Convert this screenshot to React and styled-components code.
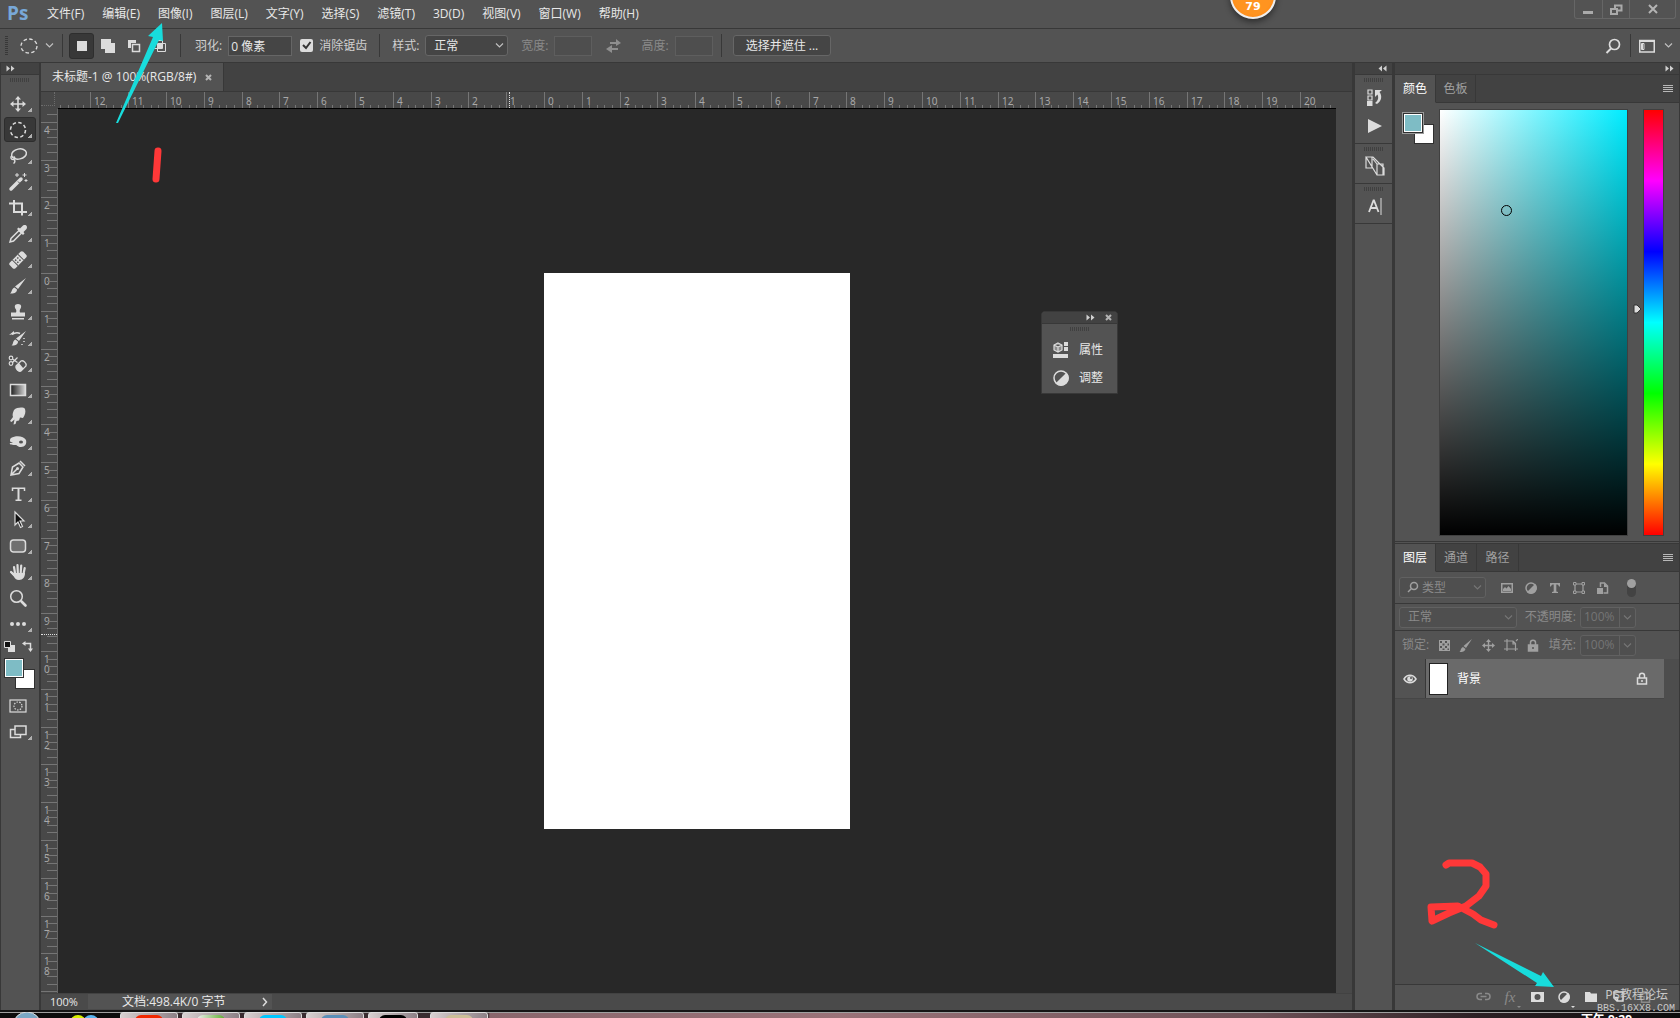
import React from "react";
import styled, { createGlobalStyle, css } from "styled-components";

const c = {
  bar: "#535353",
  dark: "#424242",
  ruler: "#484848",
  line: "#383838",
  canvas: "#282828",
  edge: "#666666",
  icon: "#dcdcdc",
  text: "#e8e8e8",
  dim: "#8a8a8a",
  fg: "#7ebcc5",
};

const Global = createGlobalStyle`
  * { box-sizing: border-box; }
  body {
    margin: 0;
    background: ${c.bar};
    color: ${c.text};
    font: 12px/16px "Open Sans", "Noto Sans CJK SC", sans-serif;
  }
  button, input, select { font: inherit; color: inherit; margin: 0; }
  button { background: none; border: 0; padding: 0; }
  svg { display: block; flex: none; }
`;

/* ---------- shell ---------- */

const Shell = styled.div`
  position: relative;
  display: flex;
  flex-direction: column;
  height: 100vh;
  overflow: hidden;
`;

const MenuBar = styled.header`
  display: flex;
  align-items: flex-start;
  height: 29px;
  flex: none;
  border-bottom: 1px solid ${c.line};
`;

const Logo = styled.div`
  width: 39px;
  padding-left: 7px;
  color: #78a8d8;
  font: 700 19px/27px "Open Sans", sans-serif;
`;

const Menus = styled.nav`
  display: flex;
  flex: 1;
  gap: 2px;
`;

const MenuItem = styled.button`
  height: 28px;
  padding: 0 8px;
  white-space: nowrap;
`;

const WindowControls = styled.div`
  display: flex;
  margin-right: 4px;
  border: 1px solid ${c.edge};
  border-top: 0;
  border-radius: 0 0 3px 3px;
`;

const WindowButton = styled.button`
  display: grid;
  place-items: center;
  width: ${(p) => (p.$wide ? 46 : 27)}px;
  height: 18px;
  & + & { border-left: 1px solid ${c.edge}; }
`;

const Badge = styled.div`
  position: absolute;
  top: -27px;
  left: calc(75% - 30px);
  width: 46px;
  height: 46px;
  border: 2px solid #eeeeee;
  border-radius: 50%;
  background: radial-gradient(circle, #ff9420 60%, #ff8614 84%, #c65a08 100%);
  box-shadow: 0 3px 6px rgba(0, 0, 0, 0.45);
  color: #fff;
  font: 700 11px/14px "DejaVu Sans", sans-serif;
  text-align: center;
  padding-top: 25px;
`;

/* ---------- options bar ---------- */

const OptionsBar = styled.div`
  display: flex;
  align-items: center;
  flex: none;
  height: 34px;
  padding: 0 7px 0 5px;
  border-bottom: 1px solid ${c.line};
`;

const Separator = styled.span`
  width: 1px;
  height: 23px;
  background: ${c.line};
  margin: 0 ${(p) => p.$after || 0}px 0 ${(p) => p.$before || 0}px;
`;

const SideGrip = styled.span`
  width: 3px;
  height: 19px;
  background: repeating-linear-gradient(${c.line} 0 1px, transparent 1px 2px);
`;

const ToolPreset = styled.button`
  display: flex;
  align-items: center;
  gap: 7px;
  margin-left: 12px;
`;

const WorkspaceButton = styled.button`
  display: flex;
  align-items: center;
  gap: 9px;
`;

const ModeButton = styled.button`
  display: grid;
  place-items: center;
  width: 25px;
  height: 26px;
  margin-right: 1px;
  border: 1px solid ${(p) => (p.$active ? "#2e2e2e" : "transparent")};
  border-radius: 3px;
  background: ${(p) => (p.$active ? "#383838" : "none")};
`;

const Field = styled.label`
  display: flex;
  align-items: center;
  gap: ${(p) => (p.$tight ? 4 : 6)}px;
  white-space: nowrap;
  margin: 0 ${(p) => p.$after || 0}px 0 ${(p) => p.$before || 0}px;
  color: ${(p) => (p.$dim ? c.dim : "#d0d0d0")};
`;

const TextInput = styled.input`
  width: ${(p) => p.$w}px;
  height: 20px;
  padding: 0 2px;
  border: 1px solid ${(p) => (p.disabled ? "#5e5e5e" : c.edge)};
  background: ${(p) => (p.disabled ? "#4e4e4e" : "#454545")};
  color: ${c.text};
`;

const Check = styled.span`
  position: relative;
  input {
    display: block;
    appearance: none;
    width: 13px;
    height: 13px;
    border-radius: 2px;
    background: ${c.icon};
  }
  svg {
    position: absolute;
    inset: 0;
    pointer-events: none;
  }
`;

const SelectBox = styled.span`
  position: relative;
  display: block;
  width: ${(p) => p.$w}px;
  select {
    display: block;
    appearance: none;
    width: 100%;
    height: 21px;
    padding: 0 20px 0 ${(p) => p.$pad || 8}px;
    border: 1px solid ${(p) => (p.$dim ? "#616161" : c.edge)};
    border-radius: 3px;
    background: ${(p) => (p.$dim ? "#4f4f4f" : "#454545")};
    color: ${(p) => (p.$dim ? c.dim : c.text)};
    opacity: 1;
  }
  svg {
    position: absolute;
    top: 7px;
    right: 4px;
    pointer-events: none;
  }
  svg.lead {
    top: 4px;
    left: 8px;
    right: auto;
  }
`;

const PushButton = styled.button`
  height: 21px;
  padding: 0 12px;
  border: 1px solid ${c.edge};
  border-radius: 3px;
  background: #454545;
  white-space: nowrap;
`;

const Spacer = styled.span`
  flex: 1;
`;

/* ---------- main area ---------- */

const Main = styled.main`
  display: flex;
  flex: 1;
  min-height: 0;
`;

const ToolColumn = styled.aside`
  display: flex;
  flex-direction: column;
  width: 41px;
  border: solid ${c.line};
  border-width: 0 2px 0 1px;
`;

const ColumnHead = styled.div`
  display: flex;
  align-items: center;
  justify-content: ${(p) => p.$justify || "flex-start"};
  height: 12px;
  flex: none;
  padding: 0 5px;
  border-bottom: 1px solid ${c.line};
  background: ${c.dark};
`;

const Grip = styled.div`
  width: 20px;
  height: 4px;
  flex: none;
  margin: 3px auto 0;
  background: repeating-linear-gradient(90deg, #404040 0 1px, transparent 1px 2px);
`;

const ToolList = styled.div`
  display: flex;
  flex-direction: column;
  gap: 1px;
  padding: ${(p) => (p.$first ? 9 : 0)}px 3px 0;
`;

const Tool = styled.button`
  position: relative;
  display: flex;
  align-items: center;
  width: 32px;
  height: 25px;
  padding-left: 1px;
  border: 1px solid ${(p) => (p.$active ? "#2d2d2d" : "transparent")};
  border-radius: 3px;
  background: ${(p) => (p.$active ? "#383838" : "none")};
  ${(p) =>
    p.$more &&
    css`
      &::after {
        content: "";
        position: absolute;
        right: 3px;
        bottom: 3px;
        width: 4px;
        height: 4px;
        background: linear-gradient(135deg, transparent 50%, #b0b0b0 50%);
      }
    `}
`;

const SwatchTools = styled.div`
  display: flex;
  justify-content: space-between;
  padding: 5px 6px 0 3px;
`;

const Swatches = styled.div`
  position: relative;
  width: 31px;
  height: 31px;
  margin: ${(p) => p.$m};
`;

const Swatch = styled.button`
  position: absolute;
  width: 20px;
  height: 20px;
  border: 1px solid #303030;
  ${(p) =>
    p.$front
      ? css`
          top: 0;
          left: 0;
          background: ${c.fg};
          box-shadow: inset 0 0 0 1px #fff;
          outline: ${p.$ring ? "1px solid #9a9a9a" : "0"};
          z-index: 1;
        `
      : css`
          right: 0;
          bottom: 0;
          background: #fff;
        `}
`;

/* ---------- document ---------- */

const DocumentArea = styled.section`
  display: flex;
  flex-direction: column;
  flex: 1;
  min-width: 0;
`;

const DocTabs = styled.div`
  display: flex;
  flex: none;
  height: 29px;
  background: ${c.dark};
  border-bottom: 1px solid ${c.line};
`;

const DocTab = styled.div`
  display: flex;
  align-items: center;
  gap: 9px;
  padding: 0 11px;
  background: ${c.bar};
  border-right: 1px solid ${c.line};
  white-space: nowrap;
`;

const DocGrid = styled.div`
  display: grid;
  flex: 1;
  min-height: 0;
  grid-template-columns: 17px 1fr 16px;
  grid-template-rows: 17px 1fr;
  background: ${c.ruler};
`;

const RulerCorner = styled.div`
  border: dotted #6c6c6c;
  border-width: 0 1px 1px 0;
  margin: 0 3px 3px 0;
`;

const HRuler = styled.div`
  position: relative;
  overflow: hidden;
  border-bottom: 1px solid #000;
`;

const VRuler = styled.div`
  position: relative;
  overflow: hidden;
  border-right: 1px solid ${c.edge};
`;

const HMark = styled.span`
  position: absolute;
  bottom: 0;
  height: ${(p) => (p.$major ? 16 : 3)}px;
  border-left: 1px ${(p) => (p.$cursor ? "dotted #e0e0e0" : "solid #757575")};
  padding-left: 3px;
  color: #a8a8a8;
  font: 10px/18px "Noto Sans", sans-serif;
`;

const VMark = styled.span`
  position: absolute;
  right: 0;
  width: ${(p) => (p.$major ? 16 : 3)}px;
  border-top: 1px ${(p) => (p.$cursor ? "dotted #e0e0e0" : "solid #757575")};
  padding: 2px 7px 0 3px;
  color: #a8a8a8;
  font: 10px/10px "Noto Sans", sans-serif;
  word-break: break-all;
`;

const Canvas = styled.div`
  position: relative;
  display: grid;
  place-items: center;
  background: ${c.canvas};
`;

const Page = styled.div`
  width: 306px;
  height: 556px;
  background: #fff;
`;

const FloatPanel = styled.div`
  position: absolute;
  top: 202px;
  right: 218px;
  width: 77px;
  border: 1px solid ${c.line};
  border-radius: 4px 4px 0 0;
  background: ${c.bar};
  overflow: hidden;
`;

const FloatHead = styled(ColumnHead)`
  gap: 10px;
`;

const FloatItems = styled.div`
  padding: 5px 0 1px;
`;

const FloatItem = styled.button`
  display: flex;
  align-items: center;
  gap: 10px;
  width: 100%;
  height: 28px;
  padding: 0 11px;
`;

const StatusBar = styled.footer`
  display: flex;
  flex: none;
  height: 17px;
  background: #4a4a4a;
  border-top: 1px solid ${c.dark};
`;

const StatusZoom = styled.span`
  width: 47px;
  padding-left: 9px;
  font-size: 11px;
  line-height: 15px;
`;

const StatusInfo = styled.button`
  display: flex;
  align-items: center;
  justify-content: space-between;
  width: 184px;
  height: 15px;
  padding: 0 3px 0 34px;
  background: ${c.bar};
  white-space: nowrap;
`;

/* ---------- right docks ---------- */

const Docks = styled.aside`
  display: flex;
  width: 328px;
  flex: none;
  border: solid ${c.line};
  border-width: 0 1px 0 3px;
`;

const IconDock = styled.div`
  width: 39px;
  flex: none;
  border-right: 2px solid ${c.line};
`;

const IconGroup = styled.div`
  display: flex;
  flex-direction: column;
  align-items: center;
  padding-bottom: 3px;
  border-bottom: 1px solid ${c.line};
`;

const DockButton = styled.button`
  display: grid;
  place-items: center;
  width: 32px;
  height: 28px;
  margin-top: 1px;
  margin-left: 3px;
`;

const Panels = styled.div`
  display: flex;
  flex-direction: column;
  flex: 1;
  min-width: 0;
  border-left: 1px solid ${c.line};
`;

const PanelTabs = styled.div`
  display: flex;
  align-items: stretch;
  flex: none;
  height: 28px;
  background: ${c.dark};
`;

const PanelTab = styled.button`
  width: ${(p) => p.$w}px;
  white-space: nowrap;
  border: solid ${c.line};
  border-width: 0 1px 1px 0;
  background: ${(p) => (p.$active ? c.bar : "none")};
  border-bottom-color: ${(p) => (p.$active ? c.bar : c.line)};
  color: ${(p) => (p.$active ? "#fff" : "#a0a0a0")};
`;

const TabFill = styled.div`
  display: flex;
  align-items: center;
  justify-content: flex-end;
  flex: 1;
  padding-right: 6px;
  border-bottom: 1px solid ${c.line};
`;

const ColorBody = styled.div`
  display: flex;
  padding: 6px 15px 5px 8px;
  border-bottom: 1px solid ${c.line};
`;

const ColorField = styled.div`
  position: relative;
  flex: 1;
  height: 427px;
  margin: 0 15px 0 5px;
  border: 1px solid #404040;
  background: linear-gradient(to top, #000, transparent), linear-gradient(to right, #fff, #00ecff);
`;

const Picker = styled.span`
  position: absolute;
  left: 61px;
  top: 95px;
  width: 11px;
  height: 11px;
  border: 1px solid #000;
  border-radius: 50%;
`;

const Hue = styled.div`
  position: relative;
  width: 21px;
  height: 427px;
  border: 1px solid #404040;
  background: linear-gradient(#f00, #f0f, #00f, #0ff, #0f0, #ff0, #f00);
  svg {
    position: absolute;
    left: -11px;
    top: 194px;
  }
`;

const LayersPanel = styled.div`
  position: relative;
  display: flex;
  flex-direction: column;
  flex: 1;
  min-height: 0;
  margin-top: 1px;
  border-top: 1px solid ${c.line};
`;

const PanelRow = styled.div`
  display: flex;
  align-items: center;
  flex: none;
  height: ${(p) => p.$h}px;
  padding: 0 4px;
  border-bottom: ${(p) => (p.$last ? 0 : 1)}px solid ${c.line};
`;

const IconStrip = styled.div`
  display: flex;
  align-items: center;
  justify-content: space-between;
  width: ${(p) => p.$w}px;
  margin: 0 ${(p) => p.$after}px 0 ${(p) => p.$before}px;
`;

const Toggle = styled.button`
  width: 9px;
  height: 18px;
  border-radius: 5px;
  background: #434343;
  &::before {
    content: "";
    display: block;
    width: 9px;
    height: 9px;
    border-radius: 50%;
    background: #a0a0a0;
    margin-bottom: 9px;
  }
`;

const Amount = styled.span`
  display: flex;
  height: 21px;
  border: 1px solid #616161;
  border-radius: 3px;
  background: #4f4f4f;
  input {
    width: 38px;
    padding: 0 3px;
    border: 0;
    background: none;
    color: #757575;
  }
  button {
    width: 16px;
    display: grid;
    place-items: center;
    border-left: 1px solid #616161;
  }
`;

const LayerList = styled.div`
  flex: 1;
  padding-right: 15px;
  background: #4d4d4d;
`;

const LayerRow = styled.div`
  display: flex;
  height: 40px;
  border-bottom: 1px solid #464646;
`;

const EyeButton = styled.button`
  display: grid;
  place-items: center;
  width: 31px;
  background: ${c.bar};
  border-right: 1px solid ${c.line};
`;

const LayerMain = styled.div`
  display: flex;
  align-items: center;
  flex: 1;
  gap: 9px;
  padding: 0 16px 0 3px;
  background: #6a6a6a;
  color: #fff;
`;

const Thumb = styled.span`
  width: 19px;
  height: 32px;
  border: 1px solid #222;
  background: #fff;
`;

const LayerFoot = styled.div`
  display: flex;
  align-items: center;
  justify-content: flex-end;
  gap: 3px;
  flex: none;
  height: 26px;
  padding: 0 22px 2px 0;
  border-top: 1px solid ${c.line};
`;

const FootButton = styled.button`
  position: relative;
  display: grid;
  place-items: center;
  width: 24px;
  height: 23px;
  color: ${(p) => (p.$dim ? c.dim : c.icon)};
  font: italic 15px/20px "Liberation Serif", serif;
  ${(p) =>
    p.$menu &&
    css`
      &::after {
        content: "";
        position: absolute;
        right: 1px;
        bottom: 0;
        border: solid transparent;
        border-width: 2px 2px 0;
        border-top-color: currentColor;
      }
    `}
`;

const Watermark = styled.div`
  position: absolute;
  right: 5px;
  bottom: 3px;
  color: #c8c8c8;
  font: 10px/12px "Liberation Mono", "Noto Sans CJK SC", monospace;
  text-align: right;
  div:first-child {
    font: 12px/13px "Liberation Mono", "Noto Sans CJK SC", monospace;
    padding-right: 7px;
  }
`;

/* ---------- desktop task bar ---------- */

const TaskBar = styled.div`
  display: flex;
  gap: 4px;
  flex: none;
  height: 8px;
  padding-left: 120px;
  border-top: 2px solid #151515;
  box-shadow: inset 0 1px 0 #a0a0a0;
  overflow: hidden;
  position: relative;
  background: linear-gradient(90deg, #0c0c0c 120px, #3a2c30 122px 488px, #8a666c 490px, #9a7278 50%, #6d5056 75%, #2c2024 88%, #0c0c0c);
`;

const TaskButton = styled.button`
  width: ${(p) => p.$w || 58}px;
  height: 8px;
  margin-left: ${(p) => p.$gap || 0}px;
  border: 1px solid #ddd;
  border-radius: 3px 3px 0 0;
  background: linear-gradient(90deg, #d8d0d0, #8d8086);
  &::before {
    content: "";
    display: block;
    width: 28px;
    height: 6px;
    margin: 2px auto 0;
    border-radius: 6px 6px 0 0;
    background: ${(p) => p.$tone};
  }
`;

const StartOrbs = styled.svg`
  position: absolute;
  left: 0;
  top: 0;
`;

const Clock = styled.time`
  position: absolute;
  right: 48px;
  top: 0;
  color: #fff;
  font-weight: 700;
  white-space: nowrap;
`;

const Annotation = styled.svg`
  position: absolute;
  pointer-events: none;
  ${(p) => p.$place}
`;

/* ---------- icons ---------- */

const Svg = ({ w = 24, h = w, children, ...rest }) => (
  <svg width={w} height={h} viewBox={`0 0 ${w} ${h}`} fill="none" stroke={c.icon} strokeWidth="1.5" aria-hidden="true" {...rest}>
    {children}
  </svg>
);

const Chevron = ({ color = "#c0c0c0" }) => (
  <Svg w={9} h={7} stroke={color} strokeWidth="1.2"><path d="M1 1.5l3.5 3.5L8 1.5" /></Svg>
);

const Double = ({ left }) => (
  <Svg w={9} h={7} stroke="none" fill="#d0d0d0">
    <path d={left ? "M4 .5v6L.5 3.5zM8.5 .5v6L5 3.5z" : "M.5 .5v6L4 3.5zM5 .5v6l3.5-3z"} />
  </Svg>
);

const Close = ({ s = 7 }) => (
  <Svg w={s} stroke="#b4b4b4" strokeWidth="2"><path d={`M1 1L${s - 1} ${s - 1}M${s - 1} 1L1 ${s - 1}`} /></Svg>
);

const MenuLines = () => (
  <Svg w={10} h={8} stroke="#b8b8b8" strokeWidth="1"><path d="M0 .5h10M0 2.5h10M0 4.5h10M0 6.5h10" /></Svg>
);

const F = { fill: c.icon, stroke: "none" };

const glyphs = {
  move: (
    <g>
      <path strokeWidth="1.6" d="M12 6v12M6 12h12" />
      <path {...F} d="M12 4l3 3.5H9zM12 20l3-3.5H9zM4 12l3.5-3v6zM20 12l-3.5-3v6z" />
    </g>
  ),
  marquee: <circle cx="12" cy="12" r="7.5" strokeDasharray="3.5 2.4" />,
  lasso: (
    <g>
      <ellipse cx="13" cy="10" rx="7.5" ry="5" transform="rotate(-12 13 10)" />
      <path d="M6 12c-2 1-1 3.5 1 3.5s2.5-2 .5-3M8 15.5c1.5 1 1 3-.5 4" />
    </g>
  ),
  wand: (
    <g>
      <path d="M5 19L15 9" strokeWidth="3.5" strokeLinecap="round" />
      <path d="M12 11.5l1.5 1.500" stroke={c.bar} strokeWidth="1" />
      <path strokeWidth="1" d="M11 3v4M9 5h4M18.5 3v4M16.5 5h4M20 9v3M18.5 10.5h3" />
    </g>
  ),
  crop: <path strokeWidth="2" d="M3 7.5h13v12M8 4v12h13" />,
  eyedropper: (
    <g>
      <path d="M4 20l1-3.5 8-8 2.5 2.5-8 8z" />
      <path {...F} d="M11 7l1.5-1.5 1.5 1 3-3c3-1.500 5 1 3.5 3.5l-3 3 1 1.5L17 13z" />
    </g>
  ),
  heal: (
    <g transform="rotate(-45 12 12)">
      <rect {...F} x="2.500" y="8" width="19" height="8" rx="2" />
      <path stroke={c.bar} strokeWidth="1" d="M8 8v8M16 8v8" />
      <path stroke={c.bar} strokeDasharray="1.5 1.5" d="M9.5 10.5h6M9.5 13.5h6" />
    </g>
  ),
  brush: <path {...F} d="M20 4L12 15l-3-2.500zM8.5 13.5l2.5 2c0 3-3 4.5-7 4 2-1 1.5-5 4.5-6z" />,
  stamp: <path {...F} d="M12 4c3.5 0 4 3 2 5.5-.5 1-.5 2 0 3H19v4H5v-4h5c.5-1 .5-2 0-3C8 7 8.500 4 12 4zM6 18h12v1.500H6z" />,
  history: (
    <g>
      <path {...F} d="M20 5l-7 10-3-2.500zM9.5 13.5l2.5 2c0 3-3 4.5-6.5 4 2-1 1-5 4-6zM3 9l5-4v3z" />
      <path d="M6 8.500c3-2 6-2 8-1M18 12v1M18 15v1M16 18v1" />
    </g>
  ),
  eraser: (
    <g>
      <path strokeWidth="1.300" d="M10 14l5-5c2-1 6 2 5 5l-5 5c-2 1-6-2-5-5z" />
      <path {...F} d="M13 11l4.500 5.500-3 3c-2 .5-5-2-4.500-5z" />
      <g strokeWidth="1.200"><circle cx="5" cy="6" r="1.800" /><circle cx="5" cy="11.500" r="1.800" /><path d="M6.500 7l5 3.500M6.500 10.500l5-5" /></g>
    </g>
  ),
  gradient: (
    <g>
      <defs><linearGradient id="gr"><stop stopColor="#1c1c1c" /><stop offset="1" stopColor="#d8d8d8" /></linearGradient></defs>
      <rect x="4.500" y="6.500" width="15" height="11" fill="url(#gr)" />
    </g>
  ),
  smudge: <path {...F} d="M8 6c3-3 10-3 11-1 1 3 0 6-2 9l-3-.5-1 3-2.500.5-1 3-2 .5 1-5-3 2.500-1.500-1L7 13c-1-2 0-5 1-7z" />,
  dodge: <path {...F} fillRule="evenodd" d="M5 8c5-3 13-2 15 2 1 4-1 7-5 7-4 0-3-2-6-2-4 0-6-1-5-2 1 0 2 0 3-.5L4.500 12C3.500 10 4 9 5 8zm10 2.500a2 1.500 0 100 3 2 1.500 0 000-3z" />,
  pen: (
    <g>
      <path d="M5 19l1.500-8L13 7l4 4-4 6.500zM14 5l5 5M5 19l6-6" />
      <circle {...F} cx="11.500" cy="12.500" r="1.500" />
    </g>
  ),
  type: (
    <g>
      <path d="M6.5 9V6.200h12V9M9.500 18.300h6" />
      <path strokeWidth="2" d="M12.500 6v12" />
    </g>
  ),
  arrow: <path fill="#111" strokeWidth="1.200" d="M9 4l9 9h-4l2.500 5.500-2 1L12 14l-3 3z" />,
  rect: <rect x="4.500" y="6" width="15" height="12" rx="3" fill="#707070" />,
  hand: (
    <g>
      <path {...F} d="M8 13h11c0 4-2 7-6 7-3 0-4-1.500-5.500-4L4.500 12.500c0-1.500 1.500-1.500 2.500 0z" />
      <path strokeWidth="2.200" strokeLinecap="round" d="M9 13L8 7M11.800 13l-.3-8M14.700 13l.5-7.500M17.600 13.500L18.700 8M8 15L5 12" />
    </g>
  ),
  zoom: <g><circle cx="10.500" cy="10.500" r="5.800" strokeWidth="1.500" /><path strokeWidth="2.600" strokeLinecap="round" d="M15.500 15.500l4 4" /></g>,
  dots: <g {...F}><circle cx="6" cy="12" r="2" /><circle cx="12" cy="12" r="2" /><circle cx="18" cy="12" r="2" /></g>,
  mask: <g><rect x="4" y="6" width="16" height="12" strokeWidth="1.200" /><circle cx="12" cy="12" r="4" strokeDasharray="1.500 1.300" strokeWidth="1.200" /></g>,
  screens: <g><path d="M9 9.500H4.500v8h10V15" /><rect x="9" y="6" width="11" height="8.500" /></g>,
};

const tools = [
  ["move", "移动"], ["marquee", "椭圆选框"], ["lasso", "套索"], ["wand", "魔棒"], ["crop", "裁剪"],
  ["eyedropper", "吸管"], ["heal", "修复画笔"], ["brush", "画笔"], ["stamp", "仿制图章"], ["history", "历史记录画笔"],
  ["eraser", "橡皮擦"], ["gradient", "渐变"], ["smudge", "涂抹"], ["dodge", "减淡"], ["pen", "钢笔"],
  ["type", "文字"], ["arrow", "选择路径"], ["rect", "形状"], ["hand", "抓手"], ["zoom", "缩放"], ["dots", "更多"],
];

const menus = ["文件(F)", "编辑(E)", "图像(I)", "图层(L)", "文字(Y)", "选择(S)", "滤镜(T)", "3D(D)", "视图(V)", "窗口(W)", "帮助(H)"];

const HalfCircle = ({ s = 12, color = c.icon }) => (
  <Svg w={s} stroke={color} strokeWidth="1.500">
    <circle cx={s / 2} cy={s / 2} r={s / 2 - 1} />
    <path fill={color} stroke="none" d={`M${s * 0.85} ${s * 0.15}A${s / 2 - 1} ${s / 2 - 1} 0 0 1 ${s * 0.15} ${s * 0.85}z`} />
  </Svg>
);

const Padlock = ({ solid, color }) => (
  <Svg w={12} h={13} stroke={color}>
    <path d="M3.500 6V3.500C3.500 .5 8.500 .5 8.500 3.500V6" />
    <rect x="1.500" y="6" width="9" height="6" fill={solid ? color : "none"} />
    <path d="M6 8v2" stroke={solid ? c.bar : color} />
  </Svg>
);

/* ---------- rulers ---------- */

const CM = 37.8;
const PAGE_W = 306;
const PAGE_H = 556;
const range = (a, b) => Array.from({ length: b - a + 1 }, (_, i) => a + i);
const at = (n, size) => `calc(50% + ${Math.round(n * CM - size / 2)}px)`;

const Horizontal = () => (
  <HRuler>
    {range(-64, 104).map((n) =>
      n % 5 === 0 ? (
        <HMark key={n} $major style={{ left: at(n / 5, PAGE_W) }}>{Math.abs(n / 5)}</HMark>
      ) : (
        <HMark key={n} style={{ left: at(n / 5, PAGE_W) }} />
      )
    )}
    <HMark $major $cursor style={{ left: at(-0.92, PAGE_W) }} />
  </HRuler>
);

const Vertical = () => (
  <VRuler>
    {range(-21, 95).map((n) =>
      n % 5 === 0 ? (
        <VMark key={n} $major style={{ top: at(n / 5, PAGE_H) }}>{n < 95 ? Math.abs(n / 5) : null}</VMark>
      ) : (
        <VMark key={n} style={{ top: at(n / 5, PAGE_H) }} />
      )
    )}
    <VMark $major $cursor style={{ top: at(9.54, PAGE_H) }} />
  </VRuler>
);

/* ---------- page ---------- */

const Options = () => (
  <OptionsBar>
    <SideGrip />
    <ToolPreset aria-label="工具预设">
      <Svg w={18} strokeWidth="1.300"><ellipse cx="9" cy="9" rx="8" ry="7" strokeDasharray="3.500 2.400" /></Svg>
      <Chevron />
    </ToolPreset>
    <Separator $before={8} $after={6} />
    <ModeButton $active aria-label="新选区"><Svg w={14} {...F}><path d="M2 2h10v10H2z" /></Svg></ModeButton>
    <ModeButton aria-label="添加到选区"><Svg w={14} {...F}><path d="M0 0h10v4h4v10H4v-4H0z" /></Svg></ModeButton>
    <ModeButton aria-label="从选区减去"><Svg w={14}><path {...F} d="M1 1h8v3H4v5H1z" /><path d="M5.500 5.500h7v7h-7z" /></Svg></ModeButton>
    <ModeButton aria-label="与选区交叉"><Svg w={14}><path strokeWidth="1" d="M1.500 1.500h8v8h-8zM4.500 4.500h8v8h-8z" /><path {...F} d="M5 5h4v4H5z" /></Svg></ModeButton>
    <Separator $before={7} $after={14} />
    <Field $after={8}>羽化: <TextInput $w={64} defaultValue="0 像素" /></Field>
    <Field>
      <Check>
        <input type="checkbox" defaultChecked />
        <Svg w={13} stroke="#333" strokeWidth="2"><path d="M3 6l3 3 4.500-6" /></Svg>
      </Check>
      消除锯齿
    </Field>
    <Separator $before={12} $after={12} />
    <Field $after={13}>
      样式:
      <SelectBox $w={83}><select><option>正常</option></select><Chevron /></SelectBox>
    </Field>
    <Field $dim $after={14}>宽度: <TextInput $w={38} disabled /></Field>
    <Svg w={16} h={14} {...F} fill="#8f8f8f"><path d="M4 3h6V0l5 4-5 3V5H4zM12 11H6v3L0 10l6-4v3h6z" /></Svg>
    <Field $dim $before={19}>高度: <TextInput $w={38} disabled /></Field>
    <Separator $before={8} $after={11} />
    <PushButton>选择并遮住 ...</PushButton>
    <Spacer />
    <Svg w={16}><circle cx="9.500" cy="6.500" r="5" strokeWidth="1.700" /><path strokeWidth="2" d="M6 10.500L1.500 15" /></Svg>
    <Separator $before={9} $after={8} />
    <WorkspaceButton aria-label="工作区">
      <Svg w={16} h={14}><path d="M.75 1.500h14.500v11.500H.75z" /><path strokeWidth="1" d="M0 2.500h16M3.500 4.500v6M2.500 4.500h2.500v6H2.500z" /></Svg>
      <Chevron />
    </WorkspaceButton>
  </OptionsBar>
);

const Layers = () => {
  const g = "#a0a0a0";
  return (
    <LayersPanel>
      <PanelTabs>
        <PanelTab $w={41} $active>图层</PanelTab>
        <PanelTab $w={41}>通道</PanelTab>
        <PanelTab $w={42}>路径</PanelTab>
        <TabFill><MenuLines /></TabFill>
      </PanelTabs>
      <PanelRow $h={32}>
        <SelectBox $w={87} $pad={22} $dim>
          <select aria-label="过滤类型"><option>类型</option></select>
          <Svg className="lead" w={12} stroke={g}><circle cx="7" cy="5" r="3.500" /><path d="M4.500 7.500L1 11" /></Svg>
          <Chevron color="#757575" />
        </SelectBox>
        <IconStrip $w={108} $before={15} $after={18}>
          <Svg w={12} h={10} stroke={g}><path d="M.75.75h10.500v8.500H.75z" /><path fill={g} stroke="none" d="M2 8V6l2-2 1.500 1.500L7.500 3 10 6v2z" /></Svg>
          <HalfCircle s={12} color={g} />
          <Svg w={12} {...F} fill={g}><path d="M1 1h10v3.500h-1C9.500 3 9 2.500 7.300 2.500V9.500l1.700.5v1H3v-1l1.700-.5v-7C3 2.500 2.500 3 2 4.500H1z" /></Svg>
          <Svg w={12} stroke={g} strokeWidth="1.200"><path d="M2 2h8v8H2z" /><path fill={c.bar} strokeWidth="1" d="M.5.5h2.500V3H.5zM9 .5h2.500V3H9zM.5 9h2.500v2.500H.5zM9 9h2.500v2.500H9z" /></Svg>
          <Svg w={12} stroke={g}><path d="M3.500 5V1h4l3 3v7H6.500" /><path fill={g} stroke="none" d="M0 6h6v6H0zM7 1v4h4z" /></Svg>
        </IconStrip>
        <Toggle aria-label="图层过滤开关" />
      </PanelRow>
      <PanelRow $h={27}>
        <SelectBox $w={118} $dim><select aria-label="混合模式"><option>正常</option></select><Chevron color="#757575" /></SelectBox>
        <Spacer />
        <Field $dim $tight $after={39}>不透明度: <Amount><input defaultValue="100%" /><button aria-label="调整不透明度"><Chevron color="#757575" /></button></Amount></Field>
      </PanelRow>
      <PanelRow $h={28} $last>
        <Field as="span" $dim $before={3}>锁定:</Field>
        <IconStrip $w={100} $before={10} $after={4}>
          <Svg w={11} {...F} fill={g}><path fillRule="evenodd" d="M0 0h11v11H0zM1 1v2h2V1zm5 0v2h2V1zM3.500 3.500v2h2v-2zm5 0v2H10v-2zM1 6v2h2V6zm5 0v2h2V6zM3.500 8.500V10h2V8.500zm5 0V10H10V8.500z" /></Svg>
          <Svg w={13} {...F} fill={g}><path d="M13 0L7 9 4.500 7zM4 8l2.500 2c-.5 2.500-3 3-6 3C2 12 1.500 9 4 8z" /></Svg>
          <Svg w={13} {...F} fill={g}><path d="M6.500 0L9 3H7.200v2.800H10V4l3 2.500L10 9V7.200H7.200V10H9l-2.500 3L4 10h1.800V7.200H3V9L0 6.500 3 4v1.800h2.800V3H4z" /></Svg>
          <Svg w={14} h={12} stroke={g} strokeWidth="1.200"><path d="M3 0v12M0 2h9l2.500 2.500V12M0 10h14M9 2v3h3M12 2l2-2" /></Svg>
          <Padlock solid color={g} />
        </IconStrip>
        <Spacer />
        <Field $dim $tight $after={39}>填充: <Amount><input defaultValue="100%" /><button aria-label="调整填充"><Chevron color="#757575" /></button></Amount></Field>
      </PanelRow>
      <LayerList>
        <LayerRow>
          <EyeButton aria-label="显示图层">
            <Svg w={14} h={10}><path d="M1 5c3-5 9-5 12 0-3 5-9 5-12 0z" /><circle {...F} cx="7" cy="5" r="2.800" /><circle cx="8" cy="4" r="1" fill={c.bar} stroke="none" /></Svg>
          </EyeButton>
          <LayerMain><Thumb />背景<Spacer /><Padlock color={c.icon} /></LayerMain>
        </LayerRow>
      </LayerList>
      <LayerFoot>
        <FootButton $dim aria-label="链接图层"><Svg w={15} h={9} stroke={c.dim}><path d="M6 1.500H4a3 3 0 000 6h2M9 1.500h2a3 3 0 010 6H9M4.500 4.500h6" /></Svg></FootButton>
        <FootButton $dim $menu aria-label="图层样式">fx</FootButton>
        <FootButton aria-label="添加蒙版"><Svg w={13} h={10}><path {...F} fillRule="evenodd" d="M0 0h13v10H0zM6.500 2a3 3 0 100 6 3 3 0 000-6z" /></Svg></FootButton>
        <FootButton $menu aria-label="调整图层"><HalfCircle s={12} /></FootButton>
        <FootButton aria-label="新建组"><Svg w={12} h={10} {...F}><path d="M0 0h5l1 1.500h6V10H0z" /></Svg></FootButton>
        <FootButton aria-label="新建图层"><Svg w={11}><path d="M1 1h9v9H4L1 7zM1 6.500h3.500V10" /></Svg></FootButton>
        <FootButton $dim aria-label="删除图层"><Svg w={11} h={12} stroke={c.dim}><path d="M0 2.500h11M3.500 2V.75h4V2M1.500 3v8.250h8V3M4 5v4M7 5v4" /></Svg></FootButton>
      </LayerFoot>
      <Annotation width="90" height="130" viewBox="1420 855 90 130" $place="right: 170px; bottom: 26px;">
        <path
          d="M1447 866l3-2h23l8 4 6 7v12l-7 10-13 10-17 7-17 8-1-14 27-1 15 8 8 6 13 5"
          fill="none" stroke="#ff3838" strokeWidth="7" strokeLinecap="round" strokeLinejoin="round"
        />
      </Annotation>
      <Annotation width="80" height="46" viewBox="1475 943 80 46" $place="right: 125px; bottom: 22px;">
        <path fill="#18dcdc" d="M1476 944l66 33 2-4 11 15-19-1 2-3z" />
      </Annotation>
    </LayersPanel>
  );
};

export default function App() {
  return (
    <Shell>
      <Global />
      <MenuBar>
        <Logo>Ps</Logo>
        <Menus>{menus.map((m) => <MenuItem key={m}>{m}</MenuItem>)}</Menus>
        <WindowControls>
          <WindowButton aria-label="最小化"><Svg w={11} {...F} fill="#aaa"><path d="M0 7h10v3H0z" /></Svg></WindowButton>
          <WindowButton aria-label="还原"><Svg w={13} h={11} stroke="#aaa" strokeWidth="2"><path d="M5 4V1.500h6.500v5H8M1 5h6v5H1z" /></Svg></WindowButton>
          <WindowButton $wide aria-label="关闭"><Close s={10} /></WindowButton>
        </WindowControls>
      </MenuBar>
      <Options />
      <Main>
        <ToolColumn>
          <ColumnHead><Double /></ColumnHead>
          <Grip />
          <ToolList $first>
            {tools.map(([id, name], i) => (
              <Tool key={id} aria-label={name} $active={i === 1} $more={id !== "zoom"}><Svg>{glyphs[id]}</Svg></Tool>
            ))}
          </ToolList>
          <SwatchTools>
            <Svg w={11}><path {...F} d="M4 4h7v7H4z" /><path fill="#111" strokeWidth="1" d="M.5.5h6v6h-6z" /></Svg>
            <Svg w={11}><path d="M3 2.500h5.500V8" /><path {...F} d="M0 2.500L3.500 0v5zM8.500 11L6 7.500h5z" /></Svg>
          </SwatchTools>
          <Swatches $m="6px 3px 4px">
            <Swatch $front aria-label="前景色" />
            <Swatch aria-label="背景色" />
          </Swatches>
          <ToolList>
            <Tool aria-label="快速蒙版"><Svg>{glyphs.mask}</Svg></Tool>
            <Tool $more aria-label="屏幕模式"><Svg>{glyphs.screens}</Svg></Tool>
          </ToolList>
        </ToolColumn>

        <DocumentArea>
          <DocTabs>
            <DocTab>未标题-1 @ 100%(RGB/8#)<button aria-label="关闭文档"><Close /></button></DocTab>
          </DocTabs>
          <DocGrid>
            <RulerCorner />
            <Horizontal />
            <span />
            <Vertical />
            <Canvas>
              <Page />
              <FloatPanel>
                <FloatHead $justify="flex-end"><Double /><Close /></FloatHead>
                <Grip />
                <FloatItems>
                  <FloatItem>
                    <Svg w={16}><path strokeWidth="1.200" fill="#8c8c8c" d="M5 1l4 2v5l-4 2-4-2V3zM1 3l4 2 4-2M5 5v5" /><path {...F} d="M11 0h4v4h-4zM11 5h4v4h-4zM0 12h15v4H0z" /></Svg>
                    属性
                  </FloatItem>
                  <FloatItem><HalfCircle s={16} />调整</FloatItem>
                </FloatItems>
              </FloatPanel>
            </Canvas>
            <span />
          </DocGrid>
          <StatusBar>
            <StatusZoom>100%</StatusZoom>
            <StatusInfo>文档:498.4K/0 字节<Svg w={8} h={10}><path d="M2 1l3.500 4L2 9" /></Svg></StatusInfo>
          </StatusBar>
        </DocumentArea>

        <Docks>
          <IconDock>
            <ColumnHead $justify="flex-end"><Double left /></ColumnHead>
            <IconGroup>
              <Grip />
              <DockButton aria-label="历史记录">
                <Svg w={16} h={17}><path strokeWidth="1.200" d="M1 1h4v4H1zM1 7h4v4H1z" /><path {...F} d="M0 12h5.500v5H0zM8 1h7l-2.500 2c3 4 2 9-2.500 12l-2-1c3-2 4-5 2.500-8.500L8 8z" /></Svg>
              </DockButton>
              <DockButton aria-label="动作"><Svg w={14} {...F}><path d="M0 0v14l14-7z" /></Svg></DockButton>
            </IconGroup>
            <IconGroup>
              <Grip />
              <DockButton aria-label="图层复合"><Svg w={20} strokeWidth="1.200"><path d="M1 1h7l11 11v7h-7L1 1zM1 1v11h6V1M12 19V8h6v11M8 3l4 5" /></Svg></DockButton>
            </IconGroup>
            <IconGroup>
              <Grip />
              <DockButton aria-label="字符"><Svg w={14} h={17}><path strokeWidth="1.800" d="M1 14L5.500 2.500h.5L10.500 14M2.500 10h6.500" /><path strokeWidth="1" d="M13 0v17" /></Svg></DockButton>
            </IconGroup>
          </IconDock>
          <Panels>
            <ColumnHead $justify="flex-end"><Double /></ColumnHead>
            <PanelTabs>
              <PanelTab $w={41} $active>颜色</PanelTab>
              <PanelTab $w={40}>色板</PanelTab>
              <TabFill><MenuLines /></TabFill>
            </PanelTabs>
            <ColorBody>
              <Swatches $m="4px 0 0">
                <Swatch $front $ring aria-label="前景色" />
                <Swatch aria-label="背景色" />
              </Swatches>
              <ColorField><Picker /></ColorField>
              <Hue><Svg w={9} h={10} fill="#ddd" stroke="#333" strokeWidth="1"><path d="M1 1h3l4 4-4 4H1z" /></Svg></Hue>
            </ColorBody>
            <Layers />
          </Panels>
        </Docks>
      </Main>
      <TaskBar>
        <StartOrbs width="110" height="8" viewBox="0 0 110 8" aria-hidden="true">
          <circle cx="27" cy="14" r="14" fill="#7aa7c4" stroke="#ddd" />
          <circle cx="78" cy="11" r="8" fill="#d8f000" />
          <circle cx="91" cy="11" r="8" fill="#58b4f0" />
        </StartOrbs>
        <TaskButton aria-label="任务一" $tone="#f22800" />
        <TaskButton aria-label="任务二" $tone="linear-gradient(90deg, #eee, #5fb030)" />
        <TaskButton aria-label="任务三" $tone="#00c8ff" />
        <TaskButton aria-label="任务四" $tone="#5b8fb8" />
        <TaskButton aria-label="任务五" $w={50} $tone="#000" />
        <TaskButton aria-label="任务六" $gap={8} $tone="#cdbf98" />
        <Clock>下午 9:29</Clock>
      </TaskBar>
      <Badge>79</Badge>
      <Annotation width="50" height="162" viewBox="115 22 50 162" $place="left: 115px; top: 22px;">
        <path fill="#18dcdc" d="M162 23l-14 13 5 1-37 86h2l41-83 4 1z" />
        <path d="M158 151l-1 14-1 14" fill="none" stroke="#ff3838" strokeWidth="7" strokeLinecap="round" />
      </Annotation>
      <Watermark><div>PS教程论坛</div><div>BBS.16XX8.COM</div></Watermark>
    </Shell>
  );
}
